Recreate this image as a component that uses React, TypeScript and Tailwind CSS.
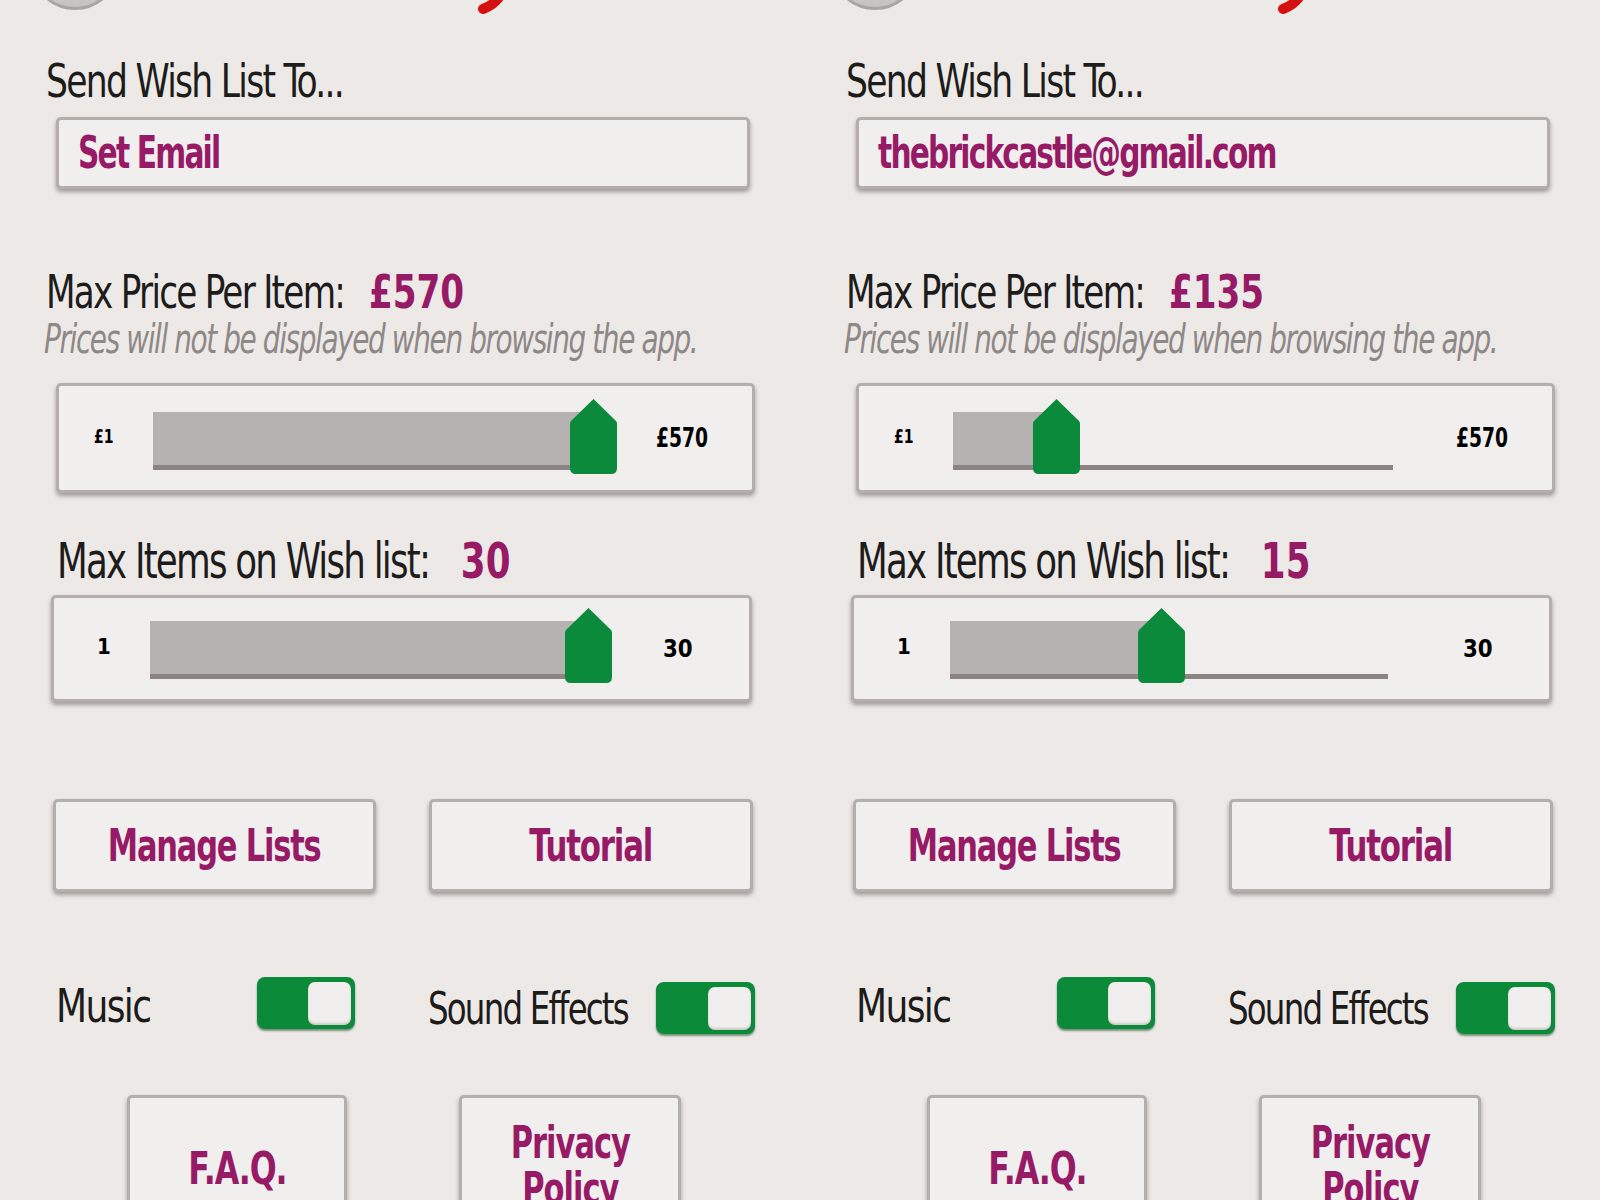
import React from "react";

const FONT = "font-['DejaVu_Sans_Condensed','DejaVu_Sans',sans-serif]";
const MAGENTA = "text-[#961a66]";
const DARK = "text-[#1e1b1b]";

const Box = ({ className, children }: { className?: string; children?: React.ReactNode }) => (
  <div
    className={`rounded-[5px] border-[3px] border-[#b4aeac] bg-[#f1efee] shadow-[0_3px_4px_rgba(70,60,60,0.45)] ${className ?? ""}`}
  >
    {children}
  </div>
);

const Thumb = () => (
  <svg width="47" height="75" viewBox="0 0 47 75">
    <path d="M23.5 0 L46 22 Q47 23 47 25 V69 Q47 75 41 75 H6 Q0 75 0 69 V25 Q0 23 1 22 Z" fill="#0b8a3c" />
  </svg>
);

type SliderProps = {
  value: number;
  min: number;
  max: number;
  minLabel: string;
  maxLabel: string;
  trackW: number;
  boxCls: string;
  leftCls: string;
  trackCls: string;
  rightCls: string;
  minText: string;
  maxText: string;
};

const Slider = (p: SliderProps) => {
  const f = (p.value - p.min) / (p.max - p.min);
  return (
    <Box className={`flex items-center ${p.boxCls}`}>
      <div className={`shrink-0 ${p.leftCls}`}>
        <span className={`inline-block origin-left font-bold leading-none text-black ${p.minText}`}>{p.minLabel}</span>
      </div>
      <div className={`relative h-[58px] shrink-0 ${p.trackCls}`}>
        <div className="absolute bottom-0 left-0 right-0 h-[5px] bg-[#8d8583]" />
        <div className="absolute left-0 top-0 h-[53px] bg-[#b5b2b1]" style={{ width: f * p.trackW }} />
        <div className="absolute top-[-13px]" style={{ left: f * p.trackW - 23.5 }}>
          <Thumb />
        </div>
      </div>
      <span className={`inline-block origin-left font-bold leading-none text-black ${p.rightCls} ${p.maxText}`}>
        {p.maxLabel}
      </span>
    </Box>
  );
};

const Toggle = ({ className }: { className?: string }) => (
  <div
    className={`flex shrink-0 items-center justify-end rounded-[8px] bg-[#0b8a3a] pr-[4px] shadow-[0_2px_2px_rgba(0,60,20,0.5)] ${className ?? ""}`}
  >
    <div className="h-[43px] w-[43px] rounded-[7px] bg-[#f1efee] shadow-[inset_0_-2px_2px_rgba(0,0,0,0.15)]" />
  </div>
);

type PanelProps = { email: string; price: number; items: number };

const Panel = ({ email, price, items }: PanelProps) => (
  <div className="relative h-[1200px] w-[800px] shrink-0 overflow-hidden">
    {/* header cut off at the top */}
    <div className="absolute left-[30px] top-[-80px] h-[90px] w-[90px] rounded-full border-[3px] border-[#aaa6a5] bg-gradient-to-b from-[#efeded] to-[#c4c1c0]" />
    <svg className="absolute left-[470px] top-0" width="50" height="20">
      <path d="M31 -6 Q26 4 13 9" stroke="#d4110f" strokeWidth="10" strokeLinecap="round" fill="none" />
    </svg>

    <div className="flex flex-col">
      <h2
        className={`ml-[46px] mt-[58px] origin-left scale-x-[0.836] whitespace-nowrap text-[46px] leading-none tracking-[-0.045em] ${DARK}`}
      >
        Send Wish List To...
      </h2>

      <Box className="ml-[56px] mt-[13px] flex h-[72px] w-[694px] items-center pl-[19px]">
        <span
          className={`inline-block origin-left scale-x-[0.75] whitespace-nowrap text-[44px] font-bold leading-none tracking-[-0.055em] ${MAGENTA}`}
        >
          {email}
        </span>
      </Box>

      <div
        className={`ml-[46px] mt-[80px] origin-left scale-x-[0.827] whitespace-nowrap text-[46px] leading-none tracking-[-0.045em] ${DARK}`}
      >
        Max Price Per Item:
        <span className={`ml-[30px] text-[46px] font-bold tracking-normal ${MAGENTA}`}>£{price}</span>
      </div>
      <p className="ml-[44px] mt-[4px] origin-left scale-x-[0.776] whitespace-nowrap text-[40px] italic leading-none tracking-[-0.045em] text-[#8e8887]">
        Prices will not be displayed when browsing the app.
      </p>

      <Slider
        value={price}
        min={1}
        max={570}
        minLabel="£1"
        maxLabel="£570"
        trackW={440}
        boxCls="ml-[56px] mt-[24px] h-[110px] w-[699px] pl-[35px]"
        leftCls="w-[59px]"
        trackCls="mt-[6px] w-[440px]"
        rightCls="ml-[63px]"
        minText="text-[20px] scale-x-[0.78]"
        maxText="text-[26px] scale-x-[0.8]"
      />

      <div
        className={`ml-[57px] mt-[43px] origin-left scale-x-[0.793] whitespace-nowrap text-[50px] leading-none tracking-[-0.045em] ${DARK}`}
      >
        Max Items on Wish list:
        <span className={`ml-[40px] font-bold tracking-normal ${MAGENTA}`}>{items}</span>
      </div>

      <Slider
        value={items}
        min={1}
        max={30}
        minLabel="1"
        maxLabel="30"
        trackW={438}
        boxCls="ml-[51px] mt-[9px] h-[107px] w-[701px] pl-[43px]"
        leftCls="w-[53px]"
        trackCls="mt-[2px] w-[438px]"
        rightCls="ml-[75px]"
        minText="text-[22px]"
        maxText="text-[25px] scale-x-[0.95]"
      />

      <div className="mt-[97px] flex">
        <Box className="ml-[53px] flex h-[93px] w-[323px] items-center justify-center">
          <span
            className={`inline-block scale-x-[0.77] whitespace-nowrap text-[44px] font-bold leading-none tracking-[-0.035em] ${MAGENTA}`}
          >
            Manage Lists
          </span>
        </Box>
        <Box className="ml-[53px] flex h-[93px] w-[324px] items-center justify-center">
          <span
            className={`inline-block scale-x-[0.78] whitespace-nowrap text-[44px] font-bold leading-none tracking-[-0.035em] ${MAGENTA}`}
          >
            Tutorial
          </span>
        </Box>
      </div>

      <div className="mt-[85px] flex h-[57px] items-start">
        <div className="ml-[56px] flex items-center">
          <div className="w-[201px] shrink-0 pt-[5px]">
            <span
              className={`inline-block origin-left scale-x-[0.87] whitespace-nowrap text-[46px] leading-none tracking-[-0.04em] ${DARK}`}
            >
              Music
            </span>
          </div>
          <Toggle className="h-[52px] w-[98px]" />
        </div>
        <div className="ml-[73px] mt-[5px] flex items-center">
          <div className="w-[228px] shrink-0 pt-[2px]">
            <span
              className={`inline-block origin-left scale-x-[0.82] whitespace-nowrap text-[44px] leading-none tracking-[-0.05em] ${DARK}`}
            >
              Sound Effects
            </span>
          </div>
          <Toggle className="h-[52px] w-[99px]" />
        </div>
      </div>

      <div className="mt-[61px] flex items-start">
        <Box className="ml-[127px] flex h-[140px] w-[220px] justify-center pt-[49px]">
          <span
            className={`inline-block scale-x-[0.8] whitespace-nowrap text-[44px] font-bold leading-none tracking-[-0.03em] ${MAGENTA}`}
          >
            F.A.Q.
          </span>
        </Box>
        <Box className="ml-[112px] flex h-[140px] w-[222px] justify-center pt-[22px] text-center">
          <span
            className={`inline-block scale-x-[0.77] text-[44px] font-bold leading-[46px] tracking-[-0.03em] ${MAGENTA}`}
          >
            Privacy
            <br />
            Policy
          </span>
        </Box>
      </div>
    </div>
  </div>
);

export default function App() {
  return (
    <div className={`flex h-[1200px] w-[1600px] overflow-hidden bg-[#ece9e7] ${FONT}`}>
      <Panel email="Set Email" price={570} items={30} />
      <Panel email="thebrickcastle@gmail.com" price={135} items={15} />
    </div>
  );
}
